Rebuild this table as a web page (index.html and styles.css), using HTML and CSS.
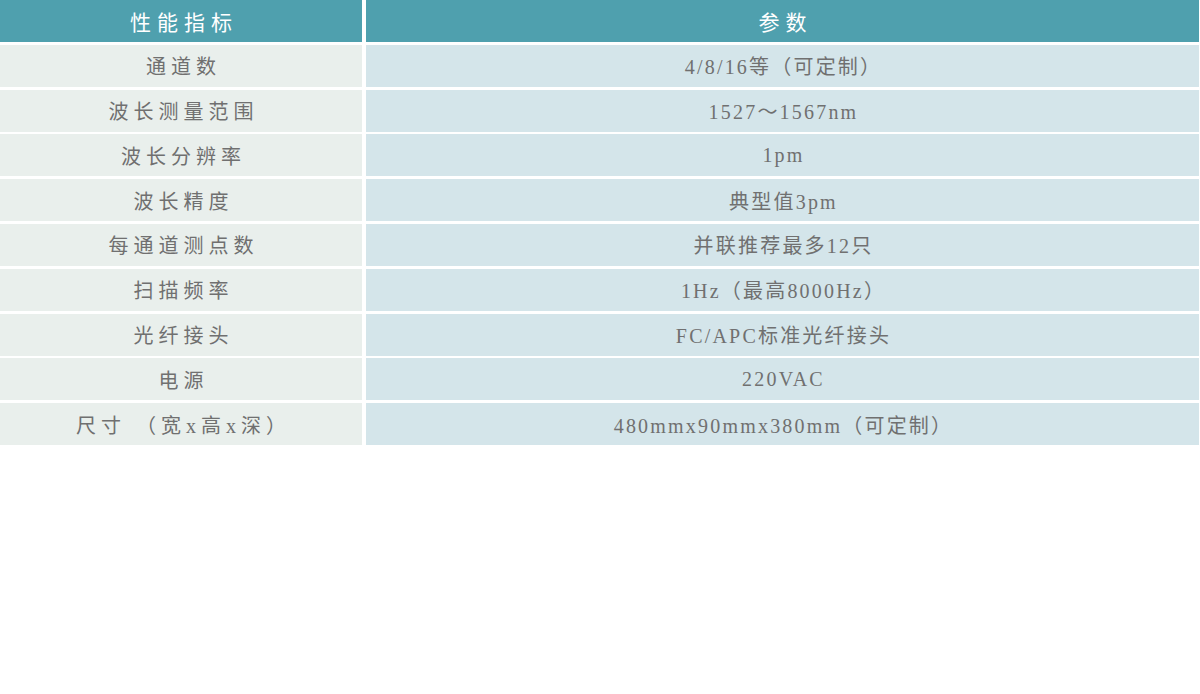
FILE: index.html
```html
<!DOCTYPE html>
<html lang="zh">
<head>
<meta charset="utf-8">
<title>性能指标</title>
<link rel="stylesheet" href="styles.css">
</head>
<body>
<div class="spec-table">
  <div class="cell head key">性能指标</div>
  <div class="cell head val">参数</div>

  <div class="cell key">通道数</div>
  <div class="cell val">4/8/16等（可定制）</div>

  <div class="cell key">波长测量范围</div>
  <div class="cell val">1527～1567nm</div>

  <div class="cell key">波长分辨率</div>
  <div class="cell val">1pm</div>

  <div class="cell key">波长精度</div>
  <div class="cell val">典型值3pm</div>

  <div class="cell key">每通道测点数</div>
  <div class="cell val">并联推荐最多12只</div>

  <div class="cell key">扫描频率</div>
  <div class="cell val">1Hz（最高8000Hz）</div>

  <div class="cell key">光纤接头</div>
  <div class="cell val">FC/APC标准光纤接头</div>

  <div class="cell key">电源</div>
  <div class="cell val">220VAC</div>

  <div class="cell key">尺寸 （宽x高x深）</div>
  <div class="cell val">480mmx90mmx380mm（可定制）</div>
</div>
</body>
</html>
```

FILE: styles.css
```css
html, body {
  margin: 0;
  padding: 0;
  background: #ffffff;
}

.spec-table {
  display: grid;
  grid-template-columns: 362px 833px;
  grid-auto-rows: 42px;
  column-gap: 4px;
  row-gap: 2.8px;
  width: 1199px;
}

.cell {
  display: flex;
  align-items: center;
  justify-content: center;
  font-family: "Liberation Serif", "Noto Sans CJK SC", serif;
  font-size: 20px;
  color: #707070;
  white-space: pre;
}

.key {
  background: #e9efec;
  letter-spacing: 5px;
  padding-left: 5px;
}

.val {
  background: #d4e5ea;
  letter-spacing: 2.2px;
  padding-left: 2px;
}

.head {
  background: #4fa0ae;
  color: #ffffff;
  font-size: 21px;
  letter-spacing: 6px;
  padding-left: 6px;
}
```
